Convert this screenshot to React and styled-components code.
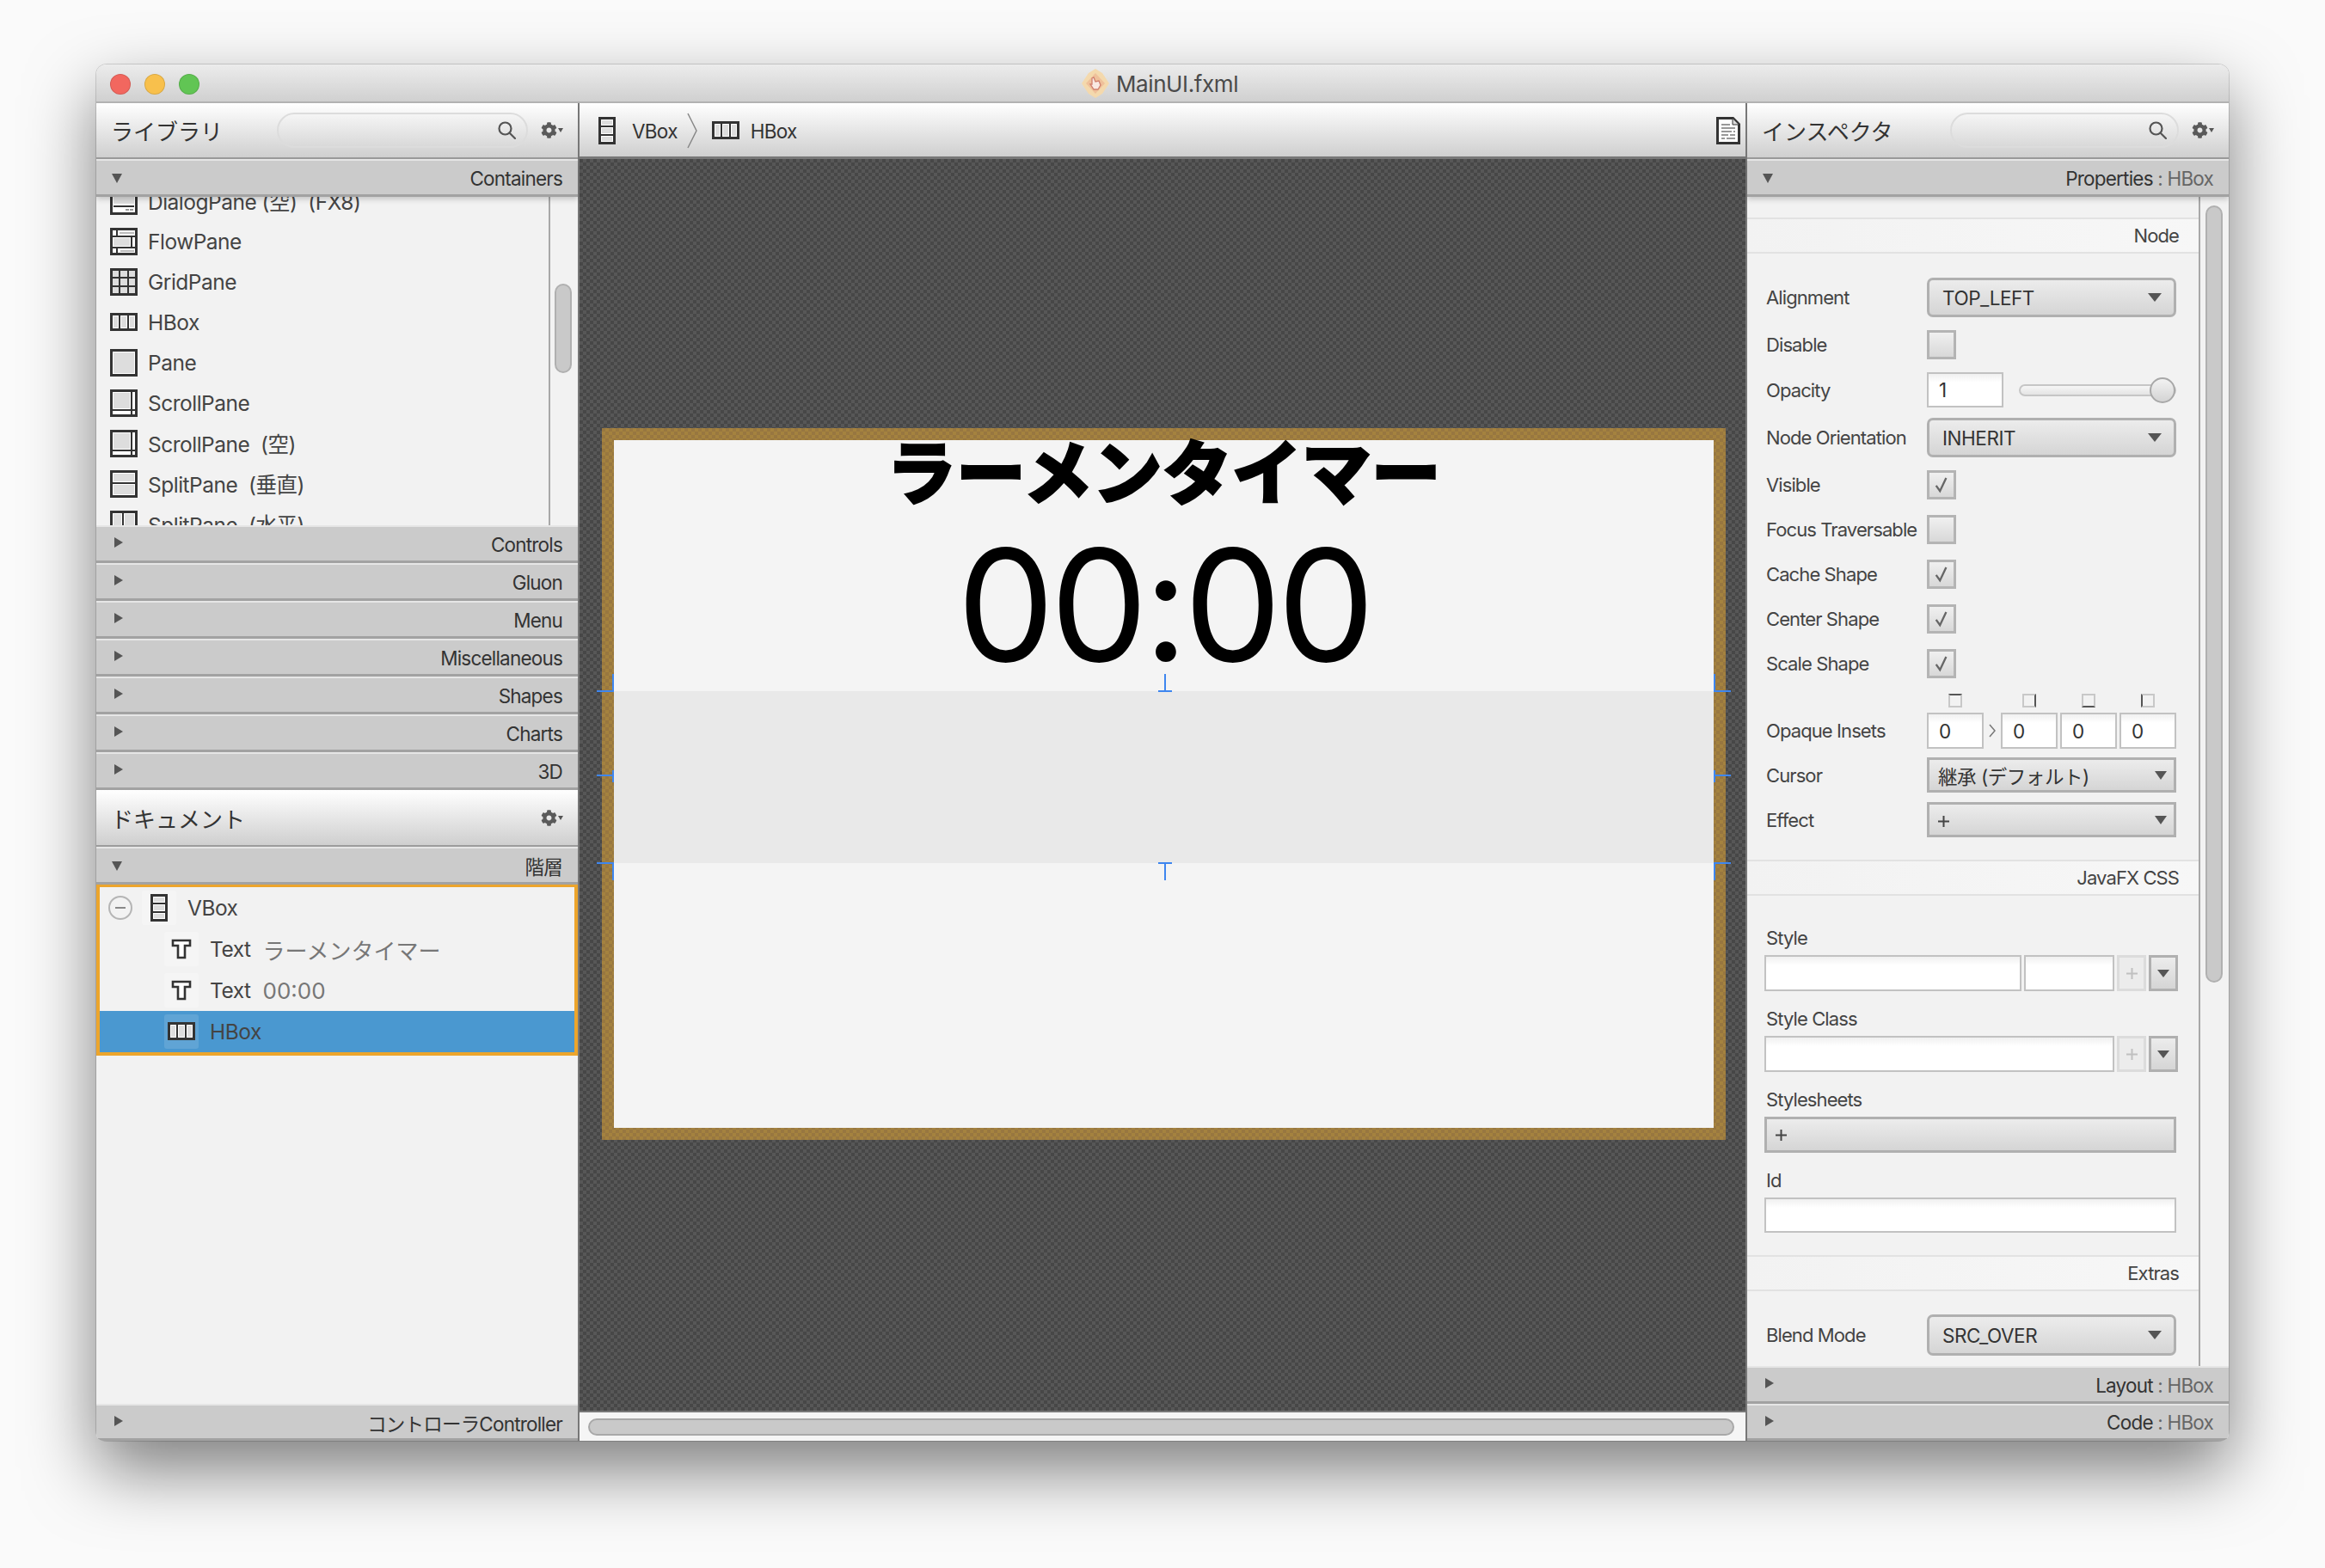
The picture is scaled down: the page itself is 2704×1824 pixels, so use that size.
import React from "react";
import styled, { createGlobalStyle } from "styled-components";
import { FaCog } from "react-icons/fa";

const GlobalStyle = createGlobalStyle`
  html, body {
    margin: 0;
    padding: 0;
    background: #fafafa;
    font-family: Inter, "Noto Sans CJK JP", sans-serif;
  }
  * { box-sizing: border-box; }
`;

const Page = styled.div`
  width: 2704px;
  height: 1824px;
  padding: 75px 0 0 112px;
  overflow: hidden;
`;

const Window = styled.div`
  width: 2480px;
  height: 1601px;
  display: flex;
  flex-direction: column;
  border-radius: 12px 12px 8px 8px;
  overflow: hidden;
  background: #f2f2f2;
`;

const WindowShadow = styled.div`
  width: 2480px;
  height: 1601px;
  border-radius: 12px;
  box-shadow: 0 0 0 1px rgba(0, 0, 0, 0.14), 0 34px 80px rgba(0, 0, 0, 0.5);
`;

const TitleBar = styled.div`
  position: relative;
  flex: 0 0 45px;
  display: flex;
  align-items: center;
  justify-content: center;
  gap: 8px;
  padding: 1px 6px 0 0;
  background: linear-gradient(#ececec, #d0d0d0);
  border-bottom: 2px solid #b2b2b2;
  color: #4a4a4a;
  font-size: 26px;
  letter-spacing: -0.4px;
`;

const Lights = styled.div`
  position: absolute;
  left: 16px;
  top: 11px;
  display: flex;
  gap: 16px;
`;

const Light = styled.span`
  width: 24px;
  height: 24px;
  border-radius: 50%;
  background: ${(p) => p.$color};
  border: 1px solid rgba(0, 0, 0, 0.12);
`;

const Columns = styled.div`
  flex: 1;
  min-height: 0;
  display: grid;
  grid-template-columns: 560px 1fr 560px;
`;

const SidePanel = styled.div`
  display: flex;
  flex-direction: column;
  min-height: 0;
`;

const Center = styled.div`
  display: flex;
  flex-direction: column;
  min-height: 0;
  border-left: 2px solid #777;
  border-right: 2px solid #777;
`;

const PanelHeader = styled.div`
  flex: 0 0 ${(p) => p.$h || 65}px;
  display: flex;
  align-items: center;
  padding: 0 16px 0 17px;
  background: linear-gradient(#fff, #cfcfcf);
  border-bottom: 2px solid #9c9c9c;
`;

const PanelTitle = styled.div`
  font-size: 26px;
  color: #333;
  letter-spacing: 0;
  flex: 1;
`;

const SearchBox = styled.div`
  width: ${(p) => p.$w}px;
  height: 41px;
  margin-right: 15px;
  display: flex;
  align-items: center;
  justify-content: flex-end;
  padding-right: 12px;
  border: 2px solid #dcdcdc;
  border-radius: 21px;
`;

const GearButton = styled.div`
  display: flex;
  align-items: center;
  gap: 1px;
  width: 27px;
  color: #5a5a5a;
`;

const Caret = styled.span`
  width: 0;
  height: 0;
  border-left: ${(p) => p.$w / 2}px solid transparent;
  border-right: ${(p) => p.$w / 2}px solid transparent;
  border-top: ${(p) => p.$h}px solid ${(p) => p.$color || "#555"};
`;

const SectionBar = styled.div`
  flex: 0 0 ${(p) => p.$h || 44}px;
  display: flex;
  align-items: center;
  justify-content: space-between;
  padding: 1px 18px 0 18px;
  background: #cbcbcb;
  border-top: 2px solid #e6e6e6;
  border-bottom: 3px solid #a2a2a2;
  font-size: 22.5px;
  letter-spacing: -0.8px;
  color: #333;
  position: relative;
  z-index: ${(p) => (p.$raised ? 2 : 0)};
  box-shadow: ${(p) => (p.$raised ? "0 3px 6px rgba(0,0,0,0.18)" : "none")};
`;

const ArrowDown = styled.span`
  width: 0;
  height: 0;
  border-left: 6.5px solid transparent;
  border-right: 6.5px solid transparent;
  border-top: 11px solid #555;
`;

const ArrowRight = styled.span`
  width: 0;
  height: 0;
  margin: -4px 0 0 3px;
  border-top: 6.5px solid transparent;
  border-bottom: 6.5px solid transparent;
  border-left: 10px solid #555;
`;

const Muted = styled.span`
  color: #666;
`;

const ListArea = styled.div`
  flex: 0 0 382px;
  display: flex;
  overflow: hidden;
`;

const ListRows = styled.div`
  flex: 1;
  margin-top: -19px;
`;

const ListRow = styled.div`
  height: 47px;
  display: flex;
  align-items: center;
  gap: 12px;
  padding-left: 16px;
  font-size: 24.5px;
  letter-spacing: -0.5px;
  color: #444;
  white-space: pre;
`;

const IconSlot = styled.span`
  width: 32px;
  display: flex;
  justify-content: center;
  align-items: center;
`;

const Gutter = styled.div`
  flex: 0 0 ${(p) => p.$w}px;
  border-left: 2px solid #a8a8a8;
`;

const Thumb = styled.div`
  width: 20px;
  height: ${(p) => p.$h}px;
  margin: ${(p) => p.$top}px 0 0 ${(p) => p.$left}px;
  background: #c9c9c9;
  border: 2px solid #b0b0b0;
  border-radius: 10px;
`;

const TreeArea = styled.div`
  flex: 1;
  background: #f2f2f2;
`;

const TreeFrame = styled.div`
  border: solid #eca52c;
  border-width: 3px 4px 4px;
`;

const TreeRow = styled.div`
  height: 48px;
  display: flex;
  align-items: center;
  padding-left: ${(p) => p.$indent}px;
  font-size: 24.5px;
  letter-spacing: -0.5px;
  color: #444;
  background: ${(p) => (p.$selected ? "#4a98d0" : "transparent")};
`;

const Expander = styled.span`
  width: 28px;
  height: 28px;
  margin-right: 11px;
  border: 2px solid #b5b5b5;
  border-radius: 50%;
  display: flex;
  align-items: center;
  justify-content: center;
  &::after {
    content: "";
    width: 12px;
    height: 2px;
    background: #888;
  }
`;

const IconTile = styled.span`
  width: 40px;
  height: 40px;
  margin-right: 13px;
  display: flex;
  align-items: center;
  justify-content: center;
  border-radius: 3px;
  background: rgba(255, 255, 255, ${(p) => (p.$selected ? 0.12 : 0.25)});
`;

const TreeValue = styled.span`
  margin-left: 14px;
  font-size: 26px;
  letter-spacing: 0;
  color: #777;
`;

const Toolbar = styled.div`
  flex: 0 0 65px;
  display: flex;
  align-items: center;
  padding: 2px 6px 0 16px;
  background: linear-gradient(#fff, #cfcfcf);
  border-bottom: 3px solid #777;
  font-size: 22.5px;
  letter-spacing: -0.7px;
  color: #333;
`;

const Crumb = styled.div`
  display: flex;
  align-items: center;
  gap: 13px;
`;

const CrumbChevron = styled.svg`
  width: 12px;
  height: 42px;
  margin: 0 17px 0 11px;
  fill: none;
  stroke: #888;
  stroke-width: 1.5;
`;

const Spacer = styled.div`
  flex: 1;
`;

const CanvasArea = styled.div`
  flex: 1;
  min-height: 0;
  padding: 313px 0 0 26px;
  background: repeating-conic-gradient(#575757 0 25%, #474747 0 50%) 0 0 / 8px 8px;
`;

const Frame = styled.div`
  position: relative;
  width: 1307px;
  height: 828px;
  padding: 14px;
  background: repeating-conic-gradient(#a4823f 0 25%, #987740 0 50%) 0 0 / 8px 8px;
`;

const Stage = styled.div`
  width: 100%;
  height: 100%;
  display: flex;
  flex-direction: column;
  align-items: center;
  background: #f4f4f4;
  color: #000;
`;

const TitleText = styled.div`
  height: 80px;
  line-height: 66px;
  font-size: 81px;
  font-weight: 900;
  white-space: nowrap;
  -webkit-text-stroke: 2px #000;
  font-family: "Noto Sans CJK JP", sans-serif;
`;

const TimerText = styled.div`
  height: 212px;
  line-height: 224px;
  font-size: 180px;
  letter-spacing: -5px;
  white-space: nowrap;
`;

const Band = styled.div`
  flex: 0 0 200px;
  align-self: stretch;
  background: #e9e9e9;
`;

const Handle = styled.svg`
  position: absolute;
  left: ${(p) => p.$x}px;
  top: ${(p) => p.$y}px;
  width: ${(p) => p.$w}px;
  height: ${(p) => p.$h}px;
  fill: none;
  stroke: #3e86ef;
  stroke-width: 2;
`;

const HScrollBar = styled.div`
  flex: 0 0 35px;
  padding: 7px 13px 0 10px;
  background: #f5f5f5;
  border-top: 2px solid #777;
`;

const HThumb = styled.div`
  height: 20px;
  background: #c9c9c9;
  border: 2px solid #a8a8a8;
  border-radius: 10px;
`;

const InspectorBody = styled.div`
  flex: 1;
  min-height: 0;
  display: flex;
  overflow: hidden;
`;

const Form = styled.div`
  flex: 1;
  padding-top: 24px;
  font-size: 22px;
  letter-spacing: -0.9px;
  color: #444;
`;

const SubHeader = styled.div`
  height: 42px;
  margin-top: ${(p) => p.$mt || 0}px;
  display: flex;
  align-items: center;
  justify-content: flex-end;
  padding-right: 23px;
  background: linear-gradient(90deg, #f2f2f2, #f7f7f7);
  border-top: 2px solid #e2e2e2;
  border-bottom: 2px solid #e2e2e2;
`;

const Field = styled.div`
  display: flex;
  align-items: center;
  margin-top: ${(p) => p.$mt || 0}px;
  padding-left: 22px;
`;

const FieldLabel = styled.div`
  flex: 0 0 187px;
  white-space: nowrap;
`;

const StackLabel = styled.div`
  height: 28px;
  line-height: 28px;
  margin-top: ${(p) => p.$mt}px;
  padding-left: 22px;
`;

const SelectButton = styled.div`
  width: 290px;
  height: ${(p) => (p.$square ? 41 : p.$h || 46)}px;
  display: flex;
  align-items: center;
  justify-content: space-between;
  padding: 0 ${(p) => (p.$square ? 8 : 14)}px 0 ${(p) => (p.$square ? 10 : 15)}px;
  border: 3px solid #b0b0b0;
  border-radius: ${(p) => (p.$square ? 0 : 7)}px;
  background: linear-gradient(#ececec, #d5d5d5);
  color: #333;
  font-size: 22.5px;
  letter-spacing: -0.45px;
  white-space: nowrap;
`;

const WideButton = styled.div`
  width: 479px;
  height: 42px;
  margin: 6px 0 0 20px;
  display: flex;
  align-items: center;
  padding-left: 10px;
  border: 3px solid #b0b0b0;
  background: linear-gradient(#ececec, #d5d5d5);
  color: #333;
`;

const CheckBox = styled.div`
  width: 34px;
  height: 34px;
  display: flex;
  align-items: center;
  justify-content: center;
  border: 3px solid #b4b4b4;
  background: linear-gradient(#f0f0f0, #d8d8d8);
`;

const TextField = styled.input`
  display: block;
  width: ${(p) => p.$w}px;
  height: ${(p) => p.$h || 41}px;
  margin: 0;
  padding: 0 0 0 ${(p) => p.$pad || 0}px;
  border: 2px solid #c2c2c2;
  border-radius: 0;
  outline: none;
  background: linear-gradient(#f0f0f0, #fff 10px);
  font: inherit;
  font-size: 22.5px;
  letter-spacing: 0;
  color: #333;
`;

const StyleRow = styled.div`
  display: flex;
  gap: 3px;
  margin: 6px 0 0 20px;
`;

const SmallButton = styled.div`
  width: 34px;
  height: 42px;
  display: flex;
  align-items: center;
  justify-content: center;
  border: 3px solid ${(p) => (p.$disabled ? "#dcdcdc" : "#b0b0b0")};
  background: ${(p) => (p.$disabled ? "#ececec" : "linear-gradient(#ececec, #d5d5d5)")};
`;

const Slider = styled.div`
  position: relative;
  width: 183px;
  height: 14px;
  margin-left: 18px;
  border: 2px solid #c6c6c6;
  border-radius: 7px;
  background: linear-gradient(#f6f6f6, #e4e4e4);
`;

const SliderKnob = styled.div`
  position: absolute;
  right: -1px;
  top: -10px;
  width: 30px;
  height: 30px;
  border: 2px solid #a8a8a8;
  border-radius: 50%;
  background: linear-gradient(#f2f2f2, #d4d4d4);
`;

const InsetRow = styled.div`
  display: flex;
  align-items: center;
  gap: 3px;
`;

const InsetIconCell = styled.div`
  width: 66px;
  display: flex;
  justify-content: center;
`;

const InsetGap = styled.div`
  width: 14px;
  display: flex;
  justify-content: center;
`;

const InsetMark = styled.div`
  width: 16px;
  height: 16px;
  border: 2px solid #c8c8c8;
  border-${(p) => p.$side}: 2px solid #555;
`;

const Ic = {
  dialog: (
    <>
      <rect x="1.5" y="1.5" width="29" height="29" fill="#fff" stroke="#333" strokeWidth="3" />
      <rect x="4" y="4" width="24" height="15" fill="#ddd" />
      <rect x="4" y="21" width="24" height="2" fill="#333" />
      <rect x="18" y="25" width="4" height="2" fill="#999" />
      <rect x="23" y="25" width="4" height="2" fill="#999" />
    </>
  ),
  flow: (
    <>
      <rect x="1.5" y="1.5" width="29" height="29" fill="#fff" stroke="#333" strokeWidth="3" />
      <path d="M8 2v8M2 10h28M2 23h28M8 23v7M25 10v13" stroke="#333" strokeWidth="2" fill="none" />
      <rect x="11" y="5" width="17" height="2" fill="#bbb" />
      <rect x="4" y="12" width="19" height="9" fill="#ddd" />
      <rect x="12" y="26" width="16" height="2" fill="#bbb" />
    </>
  ),
  grid: (
    <>
      <rect x="1.5" y="1.5" width="29" height="29" fill="#ddd" stroke="#333" strokeWidth="3" />
      <path d="M11 2v28M21 2v28M2 11h28M2 21h28" stroke="#333" strokeWidth="2" fill="none" />
    </>
  ),
  hbox: (
    <>
      <rect x="1.5" y="6.5" width="29" height="18" fill="#fff" stroke="#333" strokeWidth="3" />
      <path d="M11 7v18M21 7v18" stroke="#333" strokeWidth="2" />
      <rect x="4" y="9" width="5" height="13" fill="#ddd" />
      <rect x="13" y="9" width="6" height="13" fill="#ddd" />
      <rect x="23" y="9" width="5" height="13" fill="#ddd" />
    </>
  ),
  pane: (
    <>
      <rect x="1.5" y="1.5" width="29" height="29" fill="#fff" stroke="#333" strokeWidth="3" />
      <rect x="4" y="4" width="24" height="24" fill="#ddd" />
    </>
  ),
  scroll: (
    <>
      <rect x="1.5" y="1.5" width="29" height="29" fill="#fff" stroke="#333" strokeWidth="3" />
      <rect x="4" y="4" width="19" height="18" fill="#ddd" />
      <path d="M25 2v28M2 24h28" stroke="#333" strokeWidth="2" />
    </>
  ),
  splitV: (
    <>
      <rect x="1.5" y="1.5" width="29" height="29" fill="#fff" stroke="#333" strokeWidth="3" />
      <rect x="4" y="4" width="24" height="9" fill="#ddd" />
      <rect x="4" y="17" width="24" height="11" fill="#ddd" />
      <path d="M2 15h28" stroke="#333" strokeWidth="2" />
    </>
  ),
  splitH: (
    <>
      <rect x="1.5" y="1.5" width="29" height="29" fill="#fff" stroke="#333" strokeWidth="3" />
      <rect x="4" y="4" width="9" height="24" fill="#ddd" />
      <rect x="17" y="4" width="11" height="24" fill="#ddd" />
      <path d="M15 2v28" stroke="#333" strokeWidth="2" />
    </>
  ),
  vbox: (
    <>
      <rect x="7.5" y="1.5" width="17" height="29" fill="#fff" stroke="#333" strokeWidth="3" />
      <path d="M8 11h16M8 21h16" stroke="#333" strokeWidth="2" />
      <rect x="10" y="4" width="12" height="5" fill="#ddd" />
      <rect x="10" y="13" width="12" height="6" fill="#ddd" />
      <rect x="10" y="23" width="12" height="5" fill="#ddd" />
    </>
  ),
  text: <path d="M6 6h20v6h-6v14h-8V12H6z" fill="#fff" stroke="#333" strokeWidth="2.6" />,
};

const PaneIcon = ({ kind, size = 32 }) => (
  <svg width={size} height={size} viewBox="0 0 32 32">
    {Ic[kind]}
  </svg>
);

const SearchIcon = () => (
  <svg width="21" height="21" viewBox="0 0 21 21" fill="none" stroke="#555" strokeWidth="2.2">
    <circle cx="8.5" cy="8.5" r="7" />
    <path d="M13.5 13.5L20 20" strokeLinecap="round" />
  </svg>
);

const DocIcon = () => (
  <svg width="28" height="32" viewBox="0 0 28 32">
    <path d="M1.5 1.5h18l7 7v22h-25z" fill="#fff" stroke="#333" strokeWidth="3" />
    <path d="M19 2v7h7" fill="#ddd" stroke="#333" strokeWidth="1" />
    <path d="M6 9h10M6 13h16M6 17h12M20 17h2M6 21h8M16 21h6M6 25h4M12 25h10" stroke="#999" strokeWidth="2" />
  </svg>
);

const AppLogo = () => (
  <svg width="32" height="34" viewBox="0 0 32 34">
    <path d="M16 0l8 5 8 12-8 12-8 5-8-5L0 17 8 5z" fill="#f4d9ad" />
    <path d="M16 5l11 12-11 12L5 17z" fill="#efc09a" />
    <path d="M12 11l2-1 2 5 4-1 2 5-3 5h-5l-4-6 2 0z" fill="#f9e9e2" stroke="#d0806f" strokeWidth="1.3" />
  </svg>
);

const CheckMark = () => (
  <svg width="18" height="20" viewBox="0 0 20 22" fill="none" stroke="#666" strokeWidth="2.6">
    <path d="M3 12l5 7L16 2" />
  </svg>
);

const Plus = ({ color = "#444" }) => (
  <svg width="13" height="13" viewBox="0 0 13 13" stroke={color} strokeWidth="2">
    <path d="M6.5 0v13M0 6.5h13" />
  </svg>
);

const Gear = () => (
  <GearButton>
    <FaCog size={19} />
    <Caret $w={7} $h={5} />
  </GearButton>
);

const libraryRows = [
  ["dialog", "DialogPane (空)  (FX8)"],
  ["flow", "FlowPane"],
  ["grid", "GridPane"],
  ["hbox", "HBox"],
  ["pane", "Pane"],
  ["scroll", "ScrollPane"],
  ["scroll", "ScrollPane  (空)"],
  ["splitV", "SplitPane  (垂直)"],
  ["splitH", "SplitPane  (水平)"],
];

const librarySections = ["Controls", "Gluon", "Menu", "Miscellaneous", "Shapes", "Charts", "3D"];

const handles = [
  { x: -20, y: 272, w: 20, h: 21, d: "M0 20H19V0" },
  { x: -20, y: 384, w: 20, h: 14, d: "M0 6H19M19 0V14" },
  { x: -20, y: 491, w: 20, h: 21, d: "M0 1H19V21" },
  { x: 1279, y: 272, w: 20, h: 21, d: "M20 20H1V0" },
  { x: 1279, y: 384, w: 20, h: 14, d: "M20 6H1M1 0V14" },
  { x: 1279, y: 491, w: 20, h: 21, d: "M20 1H1V21" },
  { x: 633, y: 272, w: 16, h: 21, d: "M8 0V20M0 20H16" },
  { x: 633, y: 491, w: 16, h: 21, d: "M8 21V1M0 1H16" },
];

const Select = ({ children, square, h }) => (
  <SelectButton $square={square} $h={h}>
    <span>{children}</span>
    <Caret $w={square ? 14 : 17} $h={10} />
  </SelectButton>
);

const CheckField = ({ label, checked, mt }) => (
  <Field $mt={mt}>
    <FieldLabel>{label}</FieldLabel>
    <CheckBox>{checked && <CheckMark />}</CheckBox>
  </Field>
);

export default function App() {
  return (
    <Page>
      <GlobalStyle />
      <WindowShadow>
        <Window>
          <TitleBar>
            <Lights>
              <Light $color="#f2675f" />
              <Light $color="#f8c04c" />
              <Light $color="#61c554" />
            </Lights>
            <AppLogo />
            <span>MainUI.fxml</span>
          </TitleBar>
          <Columns>
            <SidePanel>
              <PanelHeader>
                <PanelTitle>ライブラリ</PanelTitle>
                <SearchBox $w={292}>
                  <SearchIcon />
                </SearchBox>
                <Gear />
              </PanelHeader>
              <SectionBar $raised>
                <ArrowDown />
                <span>Containers</span>
              </SectionBar>
              <ListArea>
                <ListRows>
                  {libraryRows.map(([kind, label]) => (
                    <ListRow key={label}>
                      <IconSlot>
                        <PaneIcon kind={kind} />
                      </IconSlot>
                      {label}
                    </ListRow>
                  ))}
                </ListRows>
                <Gutter $w={34}>
                  <Thumb $top={101} $left={5} $h={104} />
                </Gutter>
              </ListArea>
              {librarySections.map((name) => (
                <SectionBar key={name}>
                  <ArrowRight />
                  <span>{name}</span>
                </SectionBar>
              ))}
              <PanelHeader $h={66}>
                <PanelTitle>ドキュメント</PanelTitle>
                <Gear />
              </PanelHeader>
              <SectionBar>
                <ArrowDown />
                <span>階層</span>
              </SectionBar>
              <TreeArea>
                <TreeFrame>
                  <TreeRow $indent={10}>
                    <Expander />
                    <IconTile>
                      <PaneIcon kind="vbox" />
                    </IconTile>
                    VBox
                  </TreeRow>
                  <TreeRow $indent={75}>
                    <IconTile>
                      <PaneIcon kind="text" />
                    </IconTile>
                    Text<TreeValue>ラーメンタイマー</TreeValue>
                  </TreeRow>
                  <TreeRow $indent={75}>
                    <IconTile>
                      <PaneIcon kind="text" />
                    </IconTile>
                    Text<TreeValue>00:00</TreeValue>
                  </TreeRow>
                  <TreeRow $indent={75} $selected>
                    <IconTile $selected>
                      <PaneIcon kind="hbox" />
                    </IconTile>
                    HBox
                  </TreeRow>
                </TreeFrame>
              </TreeArea>
              <SectionBar $h={43}>
                <ArrowRight />
                <span>コントローラController</span>
              </SectionBar>
            </SidePanel>

            <Center>
              <Toolbar>
                <Crumb>
                  <PaneIcon kind="vbox" />
                  VBox
                </Crumb>
                <CrumbChevron viewBox="0 0 12 42">
                  <path d="M1 1l10 20L1 41" />
                </CrumbChevron>
                <Crumb>
                  <PaneIcon kind="hbox" />
                  HBox
                </Crumb>
                <Spacer />
                <DocIcon />
              </Toolbar>
              <CanvasArea>
                <Frame>
                  <Stage>
                    <TitleText>ラーメンタイマー</TitleText>
                    <TimerText>00:00</TimerText>
                    <Band />
                  </Stage>
                  {handles.map((h) => (
                    <Handle
                      key={`${h.x}-${h.y}`}
                      $x={h.x + 14}
                      $y={h.y + 14}
                      $w={h.w}
                      $h={h.h}
                      viewBox={`0 0 ${h.w} ${h.h}`}
                    >
                      <path d={h.d} />
                    </Handle>
                  ))}
                </Frame>
              </CanvasArea>
              <HScrollBar>
                <HThumb />
              </HScrollBar>
            </Center>

            <SidePanel>
              <PanelHeader>
                <PanelTitle>インスペクタ</PanelTitle>
                <SearchBox $w={266}>
                  <SearchIcon />
                </SearchBox>
                <Gear />
              </PanelHeader>
              <SectionBar $raised>
                <ArrowDown />
                <span>
                  Properties <Muted>: HBox</Muted>
                </span>
              </SectionBar>
              <InspectorBody>
                <Form>
                  <SubHeader>Node</SubHeader>
                  <Field $mt={28}>
                    <FieldLabel>Alignment</FieldLabel>
                    <Select>TOP_LEFT</Select>
                  </Field>
                  <CheckField label="Disable" mt={15} />
                  <Field $mt={15}>
                    <FieldLabel>Opacity</FieldLabel>
                    <TextField defaultValue="1" $w={89} $pad={12} />
                    <Slider>
                      <SliderKnob />
                    </Slider>
                  </Field>
                  <Field $mt={12}>
                    <FieldLabel>Node Orientation</FieldLabel>
                    <Select>INHERIT</Select>
                  </Field>
                  <CheckField label="Visible" mt={15} checked />
                  <CheckField label="Focus Traversable" mt={18} />
                  <CheckField label="Cache Shape" mt={18} checked />
                  <CheckField label="Center Shape" mt={18} checked />
                  <CheckField label="Scale Shape" mt={18} checked />
                  <Field $mt={18}>
                    <FieldLabel />
                    <InsetRow>
                      <InsetIconCell>
                        <InsetMark $side="top" />
                      </InsetIconCell>
                      <InsetGap />
                      <InsetIconCell>
                        <InsetMark $side="right" />
                      </InsetIconCell>
                      <InsetIconCell>
                        <InsetMark $side="bottom" />
                      </InsetIconCell>
                      <InsetIconCell>
                        <InsetMark $side="left" />
                      </InsetIconCell>
                    </InsetRow>
                  </Field>
                  <Field $mt={6}>
                    <FieldLabel>Opaque Insets</FieldLabel>
                    <InsetRow>
                      <TextField defaultValue="0" $w={66} $h={42} $pad={12} />
                      <InsetGap>
                        <svg width="8" height="16" viewBox="0 0 8 16" fill="none" stroke="#777" strokeWidth="1.5">
                          <path d="M1 1l6 7-6 7" />
                        </svg>
                      </InsetGap>
                      <TextField defaultValue="0" $w={66} $h={42} $pad={12} />
                      <TextField defaultValue="0" $w={66} $h={42} $pad={12} />
                      <TextField defaultValue="0" $w={66} $h={42} $pad={12} />
                    </InsetRow>
                  </Field>
                  <Field $mt={10}>
                    <FieldLabel>Cursor</FieldLabel>
                    <Select square>継承 (デフォルト)</Select>
                  </Field>
                  <Field $mt={11}>
                    <FieldLabel>Effect</FieldLabel>
                    <Select square>
                      <Plus />
                    </Select>
                  </Field>
                  <SubHeader $mt={26}>JavaFX CSS</SubHeader>
                  <StackLabel $mt={35}>Style</StackLabel>
                  <StyleRow>
                    <TextField $w={299} $h={42} />
                    <TextField $w={105} $h={42} />
                    <SmallButton $disabled>
                      <Plus color="#c0c0c0" />
                    </SmallButton>
                    <SmallButton>
                      <Caret $w={14} $h={9} />
                    </SmallButton>
                  </StyleRow>
                  <StackLabel $mt={18}>Style Class</StackLabel>
                  <StyleRow>
                    <TextField $w={407} $h={42} />
                    <SmallButton $disabled>
                      <Plus color="#c0c0c0" />
                    </SmallButton>
                    <SmallButton>
                      <Caret $w={14} $h={9} />
                    </SmallButton>
                  </StyleRow>
                  <StackLabel $mt={18}>Stylesheets</StackLabel>
                  <WideButton>
                    <Plus />
                  </WideButton>
                  <StackLabel $mt={18}>Id</StackLabel>
                  <StyleRow>
                    <TextField $w={479} />
                  </StyleRow>
                  <SubHeader $mt={26}>Extras</SubHeader>
                  <Field $mt={27}>
                    <FieldLabel>Blend Mode</FieldLabel>
                    <Select h={48}>SRC_OVER</Select>
                  </Field>
                </Form>
                <Gutter $w={35}>
                  <Thumb $top={10} $left={6} $h={904} />
                </Gutter>
              </InspectorBody>
              <SectionBar>
                <ArrowRight />
                <span>
                  Layout <Muted>: HBox</Muted>
                </span>
              </SectionBar>
              <SectionBar $h={43}>
                <ArrowRight />
                <span>
                  Code <Muted>: HBox</Muted>
                </span>
              </SectionBar>
            </SidePanel>
          </Columns>
        </Window>
      </WindowShadow>
    </Page>
  );
}
